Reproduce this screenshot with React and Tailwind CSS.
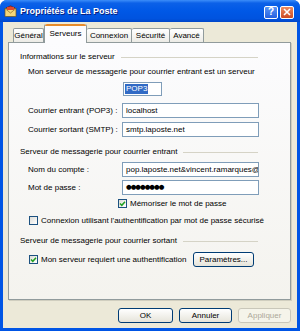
export default function App() {
  const Check = ({ checked }) => (
    <div className="w-[9px] h-[9px] border border-[#1C5180] bg-gradient-to-br from-[#DCDCD7] to-white flex items-center justify-center shrink-0">
      {checked && (
        <svg width="7" height="7" viewBox="0 0 7 7">
          <path d="M1 3.5 L2.8 5.3 L6 1.8" fill="none" stroke="#21A121" strokeWidth="1.5" />
        </svg>
      )}
    </div>
  );
  const Heading = ({ children }) => (
    <div className="mt-[9px] h-[12px] flex items-center pl-[11px] pr-[32px]">
      <span className="whitespace-nowrap">{children}</span>
      <div className="flex-1 ml-[6px] h-px bg-[#D5D3C6]" />
    </div>
  );
  const Field = ({ label, children, className = "" }) => (
    <div className={`h-[15px] flex items-center ${className}`}>
      <div className="w-[113px] pl-[19px] whitespace-nowrap">{label}</div>
      <div className="w-[137px] h-[15px] border border-[#7F9DB9] bg-white flex items-center pl-[3px] overflow-hidden whitespace-nowrap">
        {children}
      </div>
    </div>
  );
  const Btn = ({ children, w, disabled }) => (
    <div
      className={`h-[15px] rounded-[3px] border flex items-center justify-center ${w} ${
        disabled
          ? "border-[#C9C7BA] bg-[#F5F4EA] text-[#ACA899]"
          : "border-[#003C74] bg-gradient-to-b from-white to-[#E6E4DA] text-black"
      }`}
    >
      {children}
    </div>
  );
  return (
    <div className="w-[300px] h-[331px] flex flex-col bg-[#0055E5] rounded-t-[7px] overflow-hidden font-['Liberation_Sans',Arial,sans-serif] text-[8px] text-black leading-none">
      {/* title bar */}
      <div className="h-[22px] shrink-0 flex items-center pl-[4px] pr-[6px] bg-[linear-gradient(180deg,#3C8EF9_0%,#0C61E8_14%,#0058E6_50%,#0053DF_85%,#0046C8_100%)]">
        <svg width="13" height="13" viewBox="0 0 13 13">
          <path d="M2 3 L6.5 0.8 L11 3 Z" fill="#C0392B" stroke="#6B1A10" strokeWidth="0.6" />
          <rect x="1" y="3.5" width="11" height="8" fill="#F4D77A" stroke="#6A5320" strokeWidth="0.7" />
          <path d="M1 3.5 L6.5 8 L12 3.5" fill="none" stroke="#8A6A25" strokeWidth="0.7" />
          <rect x="3" y="2" width="7" height="3" fill="#E04A2C" />
        </svg>
        <span className="ml-[3px] text-white font-bold text-[9px] [text-shadow:1px_1px_0_#0A1F7A]">
          Propriétés de La Poste
        </span>
        <div className="ml-auto flex gap-[2px] mt-[2px]">
          <div className="w-[14px] h-[13px] rounded-[2px] border border-white bg-gradient-to-b from-[#5A95F5] to-[#2560E0] flex items-center justify-center text-white font-bold text-[10px]">
            ?
          </div>
          <div className="w-[14px] h-[13px] rounded-[2px] border border-white bg-gradient-to-b from-[#EE8A5E] to-[#CC4A22] flex items-center justify-center">
            <svg width="8" height="8" viewBox="0 0 8 8">
              <path d="M1 1 L7 7 M7 1 L1 7" stroke="white" strokeWidth="1.6" />
            </svg>
          </div>
        </div>
      </div>
      {/* body */}
      <div className="flex-1 mx-[3px] mb-[3px] bg-[#ECE9D8] flex flex-col">
        {/* tabs */}
        <div className="mt-[2px] ml-[10px] h-[18px] flex items-end">
          <div className="w-[31px] h-[14px] border border-b-0 border-[#919B9C] rounded-t-[2px] bg-gradient-to-b from-white to-[#ECEBE6] flex items-center justify-center">
            Général
          </div>
          <div className="relative z-10 -mb-px w-[43px] h-[19px] border-x border-[#919B9C] rounded-t-[2px] bg-[#FCFCFE] flex flex-col">
            <div className="h-[2px] bg-[#E68B2C] rounded-t-[2px]" />
            <div className="flex-1 flex items-center justify-center pb-[2px]">Serveurs</div>
          </div>
          <div className="w-[45px] h-[14px] border border-b-0 border-l-0 border-[#919B9C] rounded-t-[2px] bg-gradient-to-b from-white to-[#ECEBE6] flex items-center justify-center">
            Connexion
          </div>
          <div className="w-[38px] h-[14px] border border-b-0 border-l-0 border-[#919B9C] rounded-t-[2px] bg-gradient-to-b from-white to-[#ECEBE6] flex items-center justify-center">
            Sécurité
          </div>
          <div className="w-[34px] h-[14px] border border-b-0 border-l-0 border-[#919B9C] rounded-t-[2px] bg-gradient-to-b from-white to-[#ECEBE6] flex items-center justify-center">
            Avancé
          </div>
        </div>
        {/* panel */}
        <div className="ml-[5px] mr-[6px] h-[258px] border border-[#919B9C] bg-gradient-to-b from-[#FCFCFE] to-[#F4F3EE] shadow-[1px_1px_0_#D0CEBF] flex flex-col">
          <div className="mt-[8px] h-[12px] flex items-center pl-[11px] pr-[32px]">
            <span className="whitespace-nowrap">Informations sur le serveur</span>
            <div className="flex-1 ml-[6px] h-px bg-[#D5D3C6]" />
          </div>
          <div className="mt-[3px] h-[12px] flex items-center pl-[19px] whitespace-nowrap">
            Mon serveur de messagerie pour courrier entrant est un serveur
          </div>
          <div className="mt-[4px] ml-[114px] w-[39px] h-[14px] border border-[#7F9DB9] bg-white flex items-center pl-[1px]">
            <span className="bg-[#316AC5] text-white px-px h-[10px] flex items-center">POP3</span>
          </div>
          <Field label="Courrier entrant (POP3) :" className="mt-[7px]">localhost</Field>
          <Field label="Courrier sortant (SMTP) :" className="mt-[4px]">smtp.laposte.net</Field>
          <Heading>Serveur de messagerie pour courrier entrant</Heading>
          <Field label="Nom du compte :" className="mt-[4px]">pop.laposte.net&amp;vincent.ramarques@laposte.net</Field>
          <Field label="Mot de passe :" className="mt-[3px]">
            <span className="text-[6.5px] tracking-[-1px] font-['DejaVu_Sans',sans-serif]">●●●●●●●●</span>
          </Field>
          <div className="mt-[3px] h-[11px] ml-[109px] flex items-center gap-[3px] whitespace-nowrap">
            <Check checked />
            <span>Mémoriser le mot de passe</span>
          </div>
          <div className="mt-[6px] h-[11px] ml-[20px] flex items-center gap-[3px] whitespace-nowrap">
            <Check />
            <span>Connexion utilisant l'authentification par mot de passe sécurisé</span>
          </div>
          <Heading>Serveur de messagerie pour courrier sortant</Heading>
          <div className="mt-[5px] h-[15px] flex items-center">
            <div className="w-[184px] pl-[20px] flex items-center gap-[3px] whitespace-nowrap">
              <Check checked />
              <span>Mon serveur requiert une authentification</span>
            </div>
            <Btn w="w-[61px]">Paramètres...</Btn>
          </div>
        </div>
        {/* buttons */}
        <div className="mt-[8px] flex justify-end gap-[6px] pr-[6px]">
          <Btn w="w-[55px]">OK</Btn>
          <Btn w="w-[53px]">Annuler</Btn>
          <Btn w="w-[53px]" disabled>Appliquer</Btn>
        </div>
      </div>
    </div>
  );
}
